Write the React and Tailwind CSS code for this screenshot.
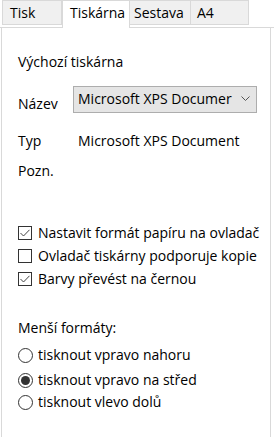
import React from 'react';

const font = { fontFamily: '"Open Sans", "Noto Sans", sans-serif' };

const Tab = ({ label, width, active }) =>
  active ? (
    <div
      className={`${width} h-[28px] bg-white border border-b-0 border-[#d9d9d9] pl-[7px] pt-[2px] leading-[20px] text-black`}
    >
      {label}
    </div>
  ) : (
    <div
      className={`${width} h-[25px] bg-[#f0f0f0] border border-[#d9d9d9] pl-[7px] pt-[2px] leading-[20px] text-black`}
    >
      {label}
    </div>
  );

const Check = ({ checked, label }) => (
  <div className="flex items-center h-[20px]">
    <span className="w-[14px] h-[14px] border border-[#333] bg-white flex items-center justify-center">
      {checked && (
        <svg width="10" height="8" viewBox="0 0 10 8">
          <path d="M0.5 4 L3.5 7 L9.5 0.8" fill="none" stroke="#444" strokeWidth="1" />
        </svg>
      )}
    </span>
    <span className="ml-[6px]">{label}</span>
  </div>
);

const Radio = ({ checked, label, className = '' }) => (
  <div className={`flex items-center h-[20px] ${className}`}>
    <span className="w-[15px] h-[15px] rounded-full border border-[#333] bg-white flex items-center justify-center">
      {checked && <span className="w-[9px] h-[9px] rounded-full bg-[#333]" />}
    </span>
    <span className="ml-[5px]">{label}</span>
  </div>
);

export default function App() {
  return (
    <div className="w-[274px] h-[437px] bg-white text-[14px] text-black overflow-hidden" style={font}>
      <div className="flex items-end w-[274px]">
        <div className="w-[2px] h-[28px] border-b border-[#d9d9d9]" />
        <div className="flex flex-col">
          <Tab label="Tisk" width="w-[60px]" />
          <div className="h-[3px] border-b border-[#d9d9d9]" />
        </div>
        <Tab label="Tiskárna" width="w-[68px]" active />
        <div className="flex flex-col">
          <div className="flex">
            <div className="w-[61px] h-[25px] bg-[#f0f0f0] border border-l-0 border-[#d9d9d9] pl-[4px] pt-[2px] leading-[20px]">
              Sestava
            </div>
            <div className="w-[58px] h-[25px] bg-[#f0f0f0] border border-l-0 border-[#d9d9d9] pl-[6px] pt-[2px] leading-[20px]">
              A4
            </div>
          </div>
          <div className="h-[3px] border-b border-[#d9d9d9]" />
        </div>
        <div className="flex-1 h-[28px] border-b border-[#d9d9d9]" />
      </div>

      <div className="ml-px w-[270px] h-[420px] border-l border-r border-[#d9d9d9] -mt-px pt-[25px] pl-[16px] leading-[20px]">
        <div>Výchozí tiskárna</div>

        <div className="flex items-center mt-[12px]">
          <span className="w-[55px] mt-[10px]">Název</span>
          <div className="w-[184px] h-[27px] bg-[#e5e5e5] border border-[#adadad] flex items-center pl-[4px] pr-[6px]">
            <span className="flex-1 whitespace-nowrap overflow-hidden">Microsoft XPS Documer</span>
            <svg width="9" height="6" viewBox="0 0 9 6" className="ml-[4px]">
              <path d="M0.5 0.5 L4.5 4.5 L8.5 0.5" fill="none" stroke="#555" strokeWidth="1" />
            </svg>
          </div>
        </div>

        <div className="flex mt-[17px]">
          <span className="w-[60px]">Typ</span>
          <span>Microsoft XPS Document</span>
        </div>

        <div className="mt-[10px]">Pozn.</div>

        <div className="mt-[42px] flex flex-col gap-[3px]">
          <Check checked label="Nastavit formát papíru na ovladač" />
          <Check label="Ovladač tiskárny podporuje kopie" />
          <Check checked label="Barvy převést na černou" />
        </div>

        <div className="mt-[29px]">Menší formáty:</div>

        <div className="mt-[7px] flex flex-col">
          <Radio label="tisknout vpravo nahoru" />
          <Radio checked label="tisknout vpravo na střed" className="mt-[5px]" />
          <Radio label="tisknout vlevo dolů" className="mt-[2px]" />
        </div>
      </div>
    </div>
  );
}
